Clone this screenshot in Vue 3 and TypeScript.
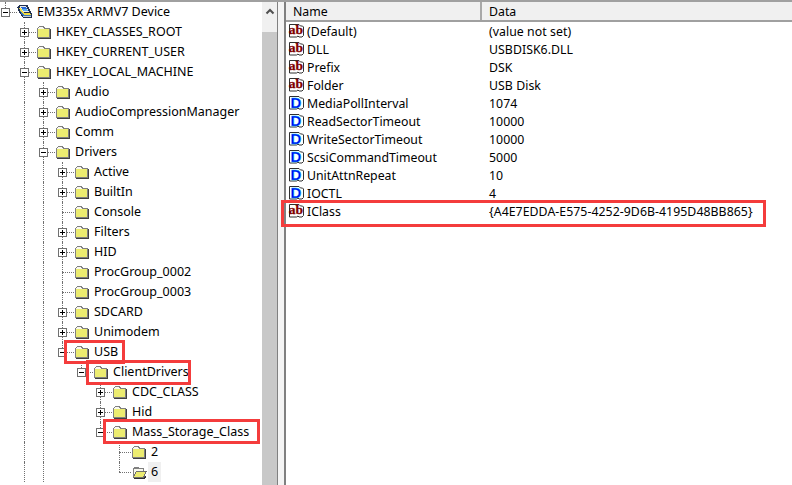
<script setup lang="ts">
interface TreeRow {
  label: string;
  level: number;
  state?: 'plus' | 'minus';
  next?: boolean;
  open?: boolean;
  focus?: boolean;
  root?: boolean;
}
interface ValueRow {
  name: string;
  data: string;
  kind: 'ab' | 'D';
}

const rows: TreeRow[] = [
  { label: 'EM335x ARMV7 Device', level: 0, state: 'minus', root: true },
  { label: 'HKEY_CLASSES_ROOT', level: 1, state: 'plus', next: true },
  { label: 'HKEY_CURRENT_USER', level: 1, state: 'plus', next: true },
  { label: 'HKEY_LOCAL_MACHINE', level: 1, state: 'minus', next: true },
  { label: 'Audio', level: 2, state: 'plus', next: true },
  { label: 'AudioCompressionManager', level: 2, state: 'plus', next: true },
  { label: 'Comm', level: 2, state: 'plus', next: true },
  { label: 'Drivers', level: 2, state: 'minus', next: true },
  { label: 'Active', level: 3, state: 'plus', next: true },
  { label: 'BuiltIn', level: 3, state: 'plus', next: true },
  { label: 'Console', level: 3, next: true },
  { label: 'Filters', level: 3, state: 'plus', next: true },
  { label: 'HID', level: 3, state: 'plus', next: true },
  { label: 'ProcGroup_0002', level: 3, next: true },
  { label: 'ProcGroup_0003', level: 3, next: true },
  { label: 'SDCARD', level: 3, state: 'plus', next: true },
  { label: 'Unimodem', level: 3, state: 'plus', next: true },
  { label: 'USB', level: 3, state: 'minus' },
  { label: 'ClientDrivers', level: 4, state: 'minus' },
  { label: 'CDC_CLASS', level: 5, state: 'plus', next: true },
  { label: 'Hid', level: 5, state: 'plus', next: true },
  { label: 'Mass_Storage_Class', level: 5, state: 'minus' },
  { label: '2', level: 6, next: true },
  { label: '6', level: 6, open: true, focus: true },
];

const values: ValueRow[] = [
  { name: '(Default)', data: '(value not set)', kind: 'ab' },
  { name: 'DLL', data: 'USBDISK6.DLL', kind: 'ab' },
  { name: 'Prefix', data: 'DSK', kind: 'ab' },
  { name: 'Folder', data: 'USB Disk', kind: 'ab' },
  { name: 'MediaPollInterval', data: '1074', kind: 'D' },
  { name: 'ReadSectorTimeout', data: '10000', kind: 'D' },
  { name: 'WriteSectorTimeout', data: '10000', kind: 'D' },
  { name: 'ScsiCommandTimeout', data: '5000', kind: 'D' },
  { name: 'UnitAttnRepeat', data: '10', kind: 'D' },
  { name: 'IOCTL', data: '4', kind: 'D' },
  { name: 'IClass', data: '{A4E7EDDA-E575-4252-9D6B-4195D48BB865}', kind: 'ab' },
];

function guides(level: number): boolean[] {
  const out: boolean[] = [];
  for (let i = 0; i < level; i++) out.push(i === 1 || i === 2);
  return out;
}
</script>

<template>
  <div class="window">
    <section class="tree-pane">
      <div class="tree">
        <div v-for="row in rows" :key="row.label" class="node">
          <span v-for="(on, i) in guides(row.level)" :key="i" class="indent" :class="{ guide: on }"></span>
          <span class="branch" :class="{ through: row.next }">
            <span v-if="row.state" class="box">
              <i class="h"></i>
              <i v-if="row.state === 'plus'" class="v"></i>
            </span>
          </span>
          <svg v-if="row.root" class="icon" width="16" height="16" viewBox="0 0 16 16" shape-rendering="crispEdges">
            <path d="M3 1h7l1 1 1 2 1 2 1 2 1 2v3l-1 1H6L4 11 2 8 1 5 0 3z" fill="#203050" />
            <path d="M3 2h6l2 4 1 2H6L4 5z" fill="#e8e8e8" />
            <path d="M4 3h5l1 2H5z" fill="#2868d8" />
            <path d="M5 5h5l1 2H6z" fill="#58b0f0" />
            <path d="M2 4h2l3 5h6l1 2H6z" fill="#f0dc40" />
            <path d="M3 7h1l3 4h7v1H6z" fill="#3878c0" />
            <path d="M6 12h8v1H6z" fill="#c8ccd0" />
          </svg>
          <svg v-else-if="row.open" class="icon" width="16" height="16" viewBox="0 0 16 16" shape-rendering="crispEdges">
            <path d="M2 14V4l1-1h4l1 1h5v3h-1V5H3v9z" fill="#808080" />
            <path d="M3 5h9v2H5l-2 5z" fill="#f8f8f0" />
            <path d="M2 14l3-7h11l-3 7z" fill="#707070" />
            <path d="M3 13l2.500-5h9L12 13z" fill="#ecec70" />
            <path d="M3 14h10l1-2h1v1l-1 2H3z" fill="#303030" />
          </svg>
          <svg v-else class="icon" width="16" height="16" viewBox="0 0 16 16" shape-rendering="crispEdges">
            <path d="M1 14V4l2-2h4l2 2h5v10z" fill="#808080" />
            <path d="M2 13V5l1-2h4l1 2h5v8z" fill="#f8f8f0" />
            <rect x="2" y="5" width="11" height="8" fill="#ecec70" />
            <path d="M14 5h1v10H2v-1h12z" fill="#404040" />
          </svg>
          <span class="label" :class="{ focus: row.focus }">{{ row.label }}</span>
        </div>
      </div>
      <div class="scrollbar">
        <div class="arrow">
          <svg width="10" height="7" viewBox="0 0 10 7">
            <path d="M1.500 5.500L5 2l3.500 3.500" fill="none" stroke="#505050" stroke-width="2" />
          </svg>
        </div>
        <div class="thumb"></div>
      </div>
      <span class="mark mark-usb"></span>
      <span class="mark mark-client"></span>
      <span class="mark mark-mass"></span>
    </section>

    <div class="splitter"></div>

    <section class="list-pane">
      <header class="columns">
        <div class="col col-name">Name</div>
        <div class="col col-data">Data</div>
      </header>
      <div v-for="v in values" :key="v.name" class="value">
        <div class="cell-name">
          <svg class="icon" width="17" height="16" viewBox="0 0 17 16">
            <path d="M1.500 1.500H11l1.500 1.500h2l1 1v8.500l-1.500 1.500h-3l-1-1-1.500 1h-7z" fill="#fff" stroke="#303030" />
            <text v-if="v.kind === 'ab'" x="8" y="11" text-anchor="middle" class="glyph-ab">ab</text>
            <text v-else x="8" y="12.500" text-anchor="middle" class="glyph-d">D</text>
          </svg>
          <span class="name-text">{{ v.name }}</span>
        </div>
        <div class="cell-data">{{ v.data }}</div>
      </div>
      <span class="mark mark-iclass"></span>
    </section>
  </div>
</template>

<style>
html, body { margin: 0; background: #fff; }
</style>

<style scoped>
.window {
  position: relative;
  display: flex;
  width: 792px;
  height: 485px;
  overflow: hidden;
  background: #fff;
  border-top: 2px solid #a0a0a0;
  box-sizing: border-box;
  font-family: "Noto Sans", sans-serif;
  font-size: 12.5px;
  color: #000;
}
.tree-pane {
  position: relative;
  display: flex;
  width: 278px;
  flex: none;
  border-right: 1px solid #808080;
  box-sizing: border-box;
}
.tree {
  flex: 1;
  min-width: 0;
}
.node {
  display: flex;
  align-items: center;
  height: 20px;
  white-space: nowrap;
}
.indent {
  position: relative;
  flex: none;
  align-self: stretch;
  width: 19px;
}
.guide::before {
  content: "";
  position: absolute;
  left: 5px;
  top: 0;
  bottom: 0;
  border-left: 1px dotted #707070;
}
.branch {
  position: relative;
  flex: none;
  align-self: stretch;
  width: 17px;
}
.branch::before {
  content: "";
  position: absolute;
  left: 5px;
  top: 0;
  height: 10px;
  border-left: 1px dotted #707070;
}
.branch.through::before { height: 20px; }
.branch::after {
  content: "";
  position: absolute;
  left: 5px;
  right: 0;
  top: 10px;
  border-top: 1px dotted #707070;
}
.box {
  position: absolute;
  z-index: 1;
  left: 1px;
  top: 6px;
  width: 9px;
  height: 9px;
  box-sizing: border-box;
  border: 1px solid #707070;
  background: #fff;
}
.box .h {
  position: absolute;
  left: 1px;
  top: 3px;
  width: 5px;
  height: 1px;
  background: #000;
}
.box .v {
  position: absolute;
  left: 3px;
  top: 1px;
  width: 1px;
  height: 5px;
  background: #000;
}
.icon { flex: none; display: block; }
.label {
  margin-left: 1px;
  padding: 0 3px;
  line-height: 20px;
}
.label.focus { background: #f0f0f0; }
.scrollbar {
  flex: none;
  display: flex;
  flex-direction: column;
  width: 15px;
}
.arrow {
  display: flex;
  justify-content: center;
  padding-top: 6px;
  height: 24px;
  background: #f0f0f0;
}
.thumb { flex: 1; background: #c8c8c8; }
.splitter {
  flex: none;
  width: 6px;
  background: #f4f4f4;
}
.list-pane {
  position: relative;
  flex: 1;
  min-width: 0;
  border-left: 2px solid #808080;
}
.columns {
  display: flex;
  height: 20px;
  box-sizing: border-box;
  background: #f0f0f0;
  border-bottom: 2px solid #a0a0a0;
  font-size: 12.3px;
}
.col {
  padding-left: 7px;
  line-height: 20px;
  box-sizing: border-box;
}
.col-name {
  width: 196px;
  border-right: 2px solid #a8a8a8;
}
.col-data { flex: 1; }
.value {
  display: flex;
  align-items: center;
  height: 18px;
  white-space: nowrap;
  font-size: 12.3px;
}
.cell-name {
  display: flex;
  align-items: center;
  width: 203px;
  padding-left: 2px;
  box-sizing: border-box;
}
.name-text { margin-left: 2px; }
.cell-data { letter-spacing: 0.05px; }
.glyph-ab {
  font-family: "Liberation Serif", serif;
  font-weight: 700;
  font-size: 13.500px;
  fill: #800000;
  stroke: #800000;
  stroke-width: 0.3px;
}
.glyph-d {
  font-family: "Liberation Sans", sans-serif;
  font-weight: 700;
  font-size: 15px;
  fill: #0000f0;
  stroke: #00c8ff;
  stroke-width: 0.4px;
}
.mark {
  position: absolute;
  z-index: 2;
  box-sizing: border-box;
  border: 3px solid #f43c3c;
}
.mark-usb { left: 64px; top: 338px; width: 61px; height: 24px; }
.mark-client { left: 86px; top: 358px; width: 105px; height: 25px; }
.mark-mass { left: 103px; top: 417px; width: 157px; height: 25px; }
.mark-iclass { left: -5px; top: 198px; width: 485px; height: 27px; }
</style>
